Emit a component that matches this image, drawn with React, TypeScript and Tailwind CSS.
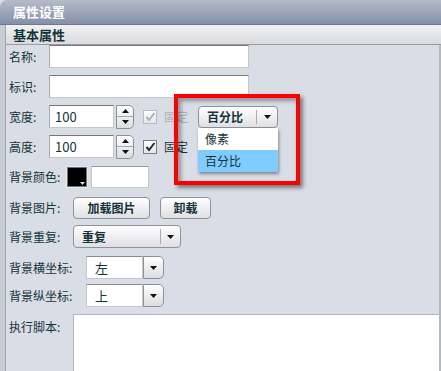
import React from "react";

const ink = "text-[#143438]";
const font = "font-['SimSun','Noto_Sans_CJK_SC',sans-serif]";

function Tri({ up = false, color = "#111" }: { up?: boolean; color?: string }) {
  return (
    <svg width="7" height="4" viewBox="0 0 7 4">
      <polygon points={up ? "0,4 7,4 3.5,0" : "0,0 7,0 3.5,4"} fill={color} />
    </svg>
  );
}

function Label({ text, w }: { text: string; w: number }) {
  return (
    <span className={`${ink} text-[12px] shrink-0`} style={{ width: w }}>
      {text}
    </span>
  );
}

function Field({ w, value }: { w: string; value?: string }) {
  return (
    <div
      className={`${w} h-[23px] bg-white border border-[#c4c7cc] border-t-[#767676] border-l-[#a9abaf] flex items-center pl-[5px] ${ink} text-[13px]`}
    >
      {value}
    </div>
  );
}

function Spinner() {
  return (
    <div className="ml-[2px] w-[18px] h-[24px] rounded-r-[5px] border border-[#8e9196] bg-gradient-to-b from-white to-[#dcdde0] flex flex-col">
      <div className="flex-1 flex items-center justify-center border-b border-[#a5a8ad]">
        <Tri up />
      </div>
      <div className="flex-1 flex items-center justify-center">
        <Tri />
      </div>
    </div>
  );
}

function Check({ disabled = false }: { disabled?: boolean }) {
  return (
    <div
      className={`w-[14px] h-[14px] border ${disabled ? "border-[#b9bcc1]" : "border-[#7a7d82]"} bg-gradient-to-b from-white to-[#e4e5e8] flex items-center justify-center`}
    >
      <svg width="11" height="10" viewBox="0 0 11 10">
        <polyline
          points="1.5,5 4,8 9.5,1"
          fill="none"
          stroke={disabled ? "#aeb2b7" : "#1b2b30"}
          strokeWidth="2"
        />
      </svg>
    </div>
  );
}

function Btn({ text, w }: { text: string; w: string }) {
  return (
    <div
      className={`${w} h-[22px] rounded-[4px] border border-[#8e9196] bg-gradient-to-b from-white to-[#dfe0e3] flex items-center justify-center ${ink} text-[12px] font-bold`}
    >
      {text}
    </div>
  );
}

function Combo({ text }: { text: string }) {
  return (
    <div className="w-[108px] h-[23px] rounded-[4px] border border-[#8e9196] bg-gradient-to-b from-white to-[#dfe0e3] flex items-center">
      <span className={`flex-1 pl-[8px] ${ink} text-[12px] font-bold`}>{text}</span>
      <div className="w-px h-[15px] bg-[#a9acb1]" />
      <div className="w-[19px] flex justify-center">
        <Tri />
      </div>
    </div>
  );
}

function PosSelect({ text }: { text: string }) {
  return (
    <div className="flex">
      <div className={`w-[57px] h-[23px] bg-white border border-[#c4c7cc] border-t-[#8a8a8a] flex items-center pl-[8px] ${ink} text-[13px]`}>
        {text}
      </div>
      <div className="w-[21px] h-[23px] rounded-r-[5px] border border-[#8e9196] bg-gradient-to-b from-white to-[#dcdde0] flex items-center justify-center">
        <Tri />
      </div>
    </div>
  );
}

export default function App() {
  return (
    <div className={`relative w-[441px] h-[371px] overflow-hidden bg-[#d9dde5] ${font}`}>
      <div className="h-[25px] rounded-tl-[7px] bg-gradient-to-b from-[#b5bbc8] to-[#8590a9] border-b border-[#6c7791] flex items-center pl-[13px]">
        <span className="text-white text-[13px] font-bold">属性设置</span>
      </div>
      <div className="flex h-[346px]">
        <div className="w-[6px] bg-[#c8ccd4] border-r border-[#a1a5ad]" />
        <div className="flex-1 flex flex-col">
          <div className="h-[20px] bg-gradient-to-b from-[#f1f1f3] to-[#dadbdf] border-b border-[#9b9b9b] flex items-center pl-[7px]">
            <span className={`${ink} text-[13px] font-bold`}>基本属性</span>
          </div>
          <div className="flex-1 flex flex-col gap-[7px] pl-[3px] border-r-2 border-[#b4b7bc]">
            <div className="flex items-center h-[23px]">
              <Label text="名称:" w={40} />
              <Field w="w-[200px]" />
            </div>
            <div className="flex items-center h-[23px]">
              <Label text="标识:" w={40} />
              <Field w="w-[200px]" />
            </div>
            <div className="flex items-center h-[23px]">
              <Label text="宽度:" w={40} />
              <Field w="w-[65px]" value="100" />
              <Spinner />
              <div className="ml-[9px]">
                <Check disabled />
              </div>
              <span className="ml-[7px] text-[12px] text-[#a9adb3]">固定</span>
            </div>
            <div className="flex items-center h-[23px]">
              <Label text="高度:" w={40} />
              <Field w="w-[65px]" value="100" />
              <Spinner />
              <div className="ml-[9px]">
                <Check />
              </div>
              <span className={`ml-[7px] text-[12px] ${ink}`}>固定</span>
            </div>
            <div className="flex items-center h-[23px]">
              <Label text="背景颜色:" w={58} />
              <div className="relative w-[20px] h-[20px] bg-black border border-[#6f7277] outline outline-1 outline-[#e8e9eb]">
                <svg className="absolute right-[1px] bottom-[1px]" width="5" height="3" viewBox="0 0 5 3">
                  <polygon points="0,0 5,0 2.5,3" fill="#ddd" />
                </svg>
              </div>
              <div className="ml-[4px] w-[58px] h-[22px] bg-white border border-[#c4c7cc] border-t-[#9a9a9a]" />
            </div>
            <div className="flex items-center h-[23px] mt-[1px]">
              <Label text="背景图片:" w={64} />
              <Btn text="加载图片" w="w-[77px]" />
              <div className="ml-[10px]">
                <Btn text="卸载" w="w-[51px]" />
              </div>
            </div>
            <div className="flex items-center h-[23px] -mt-[1px]">
              <Label text="背景重复:" w={64} />
              <Combo text="重复" />
            </div>
            <div className="flex items-center h-[23px] mt-[1px]">
              <Label text="背景横坐标:" w={77} />
              <PosSelect text="左" />
            </div>
            <div className="flex items-center h-[23px] -mt-[2px]">
              <Label text="背景纵坐标:" w={77} />
              <PosSelect text="上" />
            </div>
            <div className="flex items-start">
              <span className={`${ink} text-[12px] w-[64px] pt-[4px]`}>执行脚本:</span>
              <div className="flex-1 h-[60px] bg-white border-t border-l border-[#b2b5ba]" />
            </div>
          </div>
        </div>
      </div>

      {/* highlighted unit dropdown */}
      <div className="absolute left-[174px] top-[94px] w-[126px] h-[91px] border-[4px] border-[#ff0000] shadow-[3px_3px_4px_rgba(0,0,0,0.45),inset_3px_3px_4px_rgba(0,0,0,0.35)]" />
      <div className="absolute left-[198px] top-[106px] w-[80px]">
        <div className="h-[22px] rounded-[4px] border border-[#8e9196] bg-gradient-to-b from-white to-[#dfe0e3] flex items-center">
          <span className={`flex-1 pl-[8px] ${ink} text-[12px] font-bold`}>百分比</span>
          <div className="w-px h-[14px] bg-[#a9acb1]" />
          <div className="w-[20px] flex justify-center">
            <Tri />
          </div>
        </div>
        <div className="shadow-[1px_2px_3px_rgba(0,0,0,0.4)]">
          <div className={`h-[22px] bg-white flex items-center pl-[7px] ${ink} text-[12px]`}>像素</div>
          <div className={`h-[22px] bg-[#80ccff] flex items-center pl-[7px] ${ink} text-[12px]`}>百分比</div>
        </div>
      </div>
    </div>
  );
}
